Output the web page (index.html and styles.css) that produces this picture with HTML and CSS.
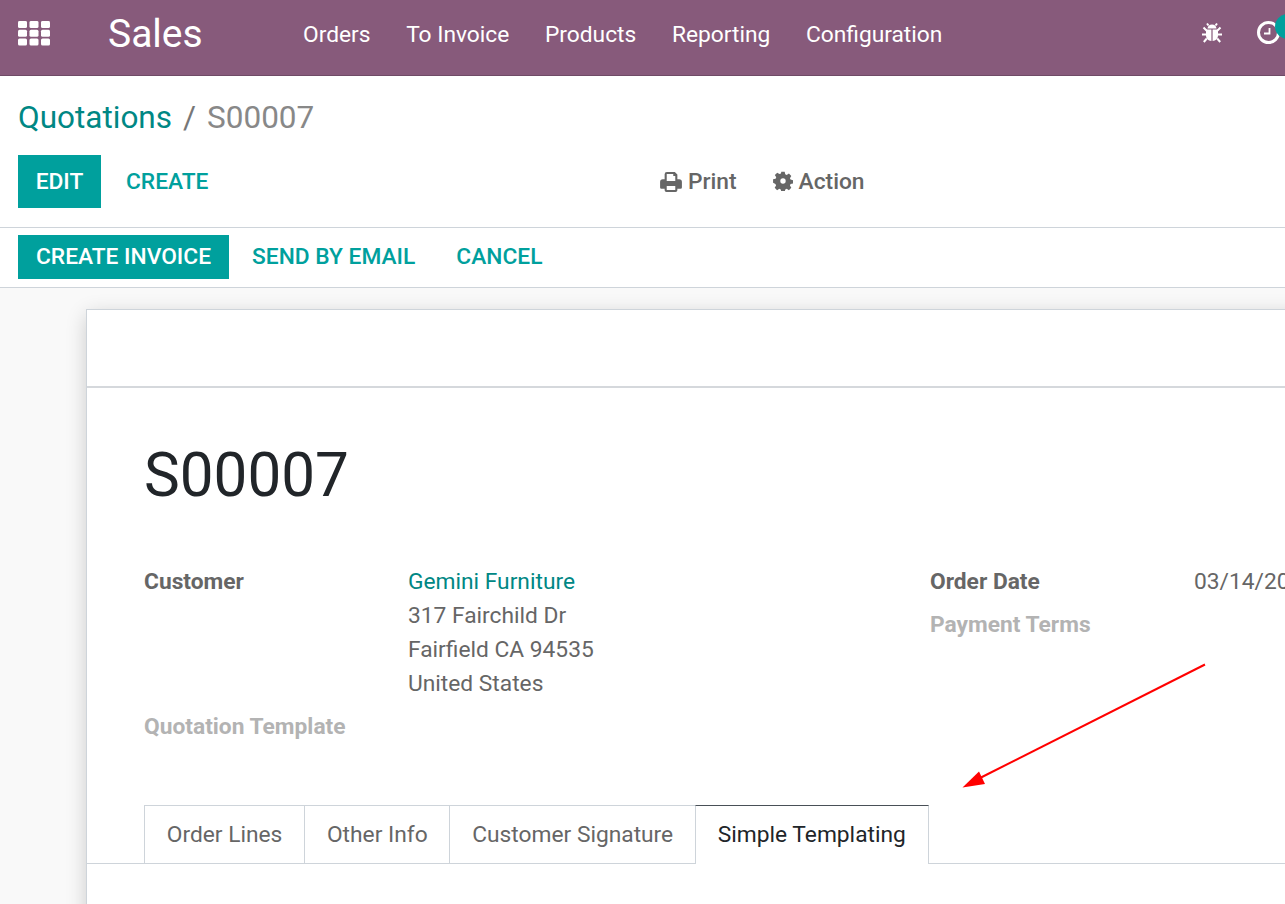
FILE: index.html
```html
<!DOCTYPE html>
<html lang="en">
<head>
<meta charset="utf-8">
<title>Sales</title>
<link rel="stylesheet" href="styles.css">
</head>
<body>
<header class="nav">
  <svg class="apps" viewBox="0 0 32 24.400" width="32" height="24.400" aria-hidden="true">
    <g fill="#fff">
      <rect x="0" y="0" width="9" height="7" rx="1.5"/><rect x="11.500" y="0" width="9" height="7" rx="1.5"/><rect x="23" y="0" width="9" height="7" rx="1.5"/>
      <rect x="0" y="8.700" width="9" height="7" rx="1.5"/><rect x="11.500" y="8.700" width="9" height="7" rx="1.5"/><rect x="23" y="8.700" width="9" height="7" rx="1.5"/>
      <rect x="0" y="17.400" width="9" height="7" rx="1.5"/><rect x="11.500" y="17.400" width="9" height="7" rx="1.5"/><rect x="23" y="17.400" width="9" height="7" rx="1.5"/>
    </g>
  </svg>
  <span class="brand">Sales</span>
  <nav class="menu">
    <span>Orders</span><span>To Invoice</span><span>Products</span><span>Reporting</span><span>Configuration</span>
  </nav>
  <div class="systray">
    <svg class="bug" viewBox="0 0 22 22" width="22" height="22" aria-hidden="true">
      <path d="M6.500 6.500C6.800 3.800 8.600 2.400 11 2.400s4.200 1.400 4.500 4.100z" fill="#fff"/>
      <path d="M5 7.600h5.400v11.400C7.300 18.700 5 16.500 5 13.500zM11.600 7.600H17v5.900c0 3-2.300 5.200-5.400 5.500z" fill="#fff"/>
      <path d="M5.500 8.500 2.500 5.500M16.500 8.500l3-3M5 12.500H1M17 12.500h4M5.800 16.500l-3 3.500M16.200 16.500l3 3.500M7.500 3.500 6 1.500M14.500 3.500 16 1.500" stroke="#fff" stroke-width="2" fill="none"/>
    </svg>
    <span class="clock-wrap">
      <svg class="clock" viewBox="0 0 23 23" width="23" height="23" aria-hidden="true">
        <circle cx="11.500" cy="11.500" r="10" fill="none" stroke="#fff" stroke-width="3"/>
        <path d="M12.500 7v5.500H7" fill="none" stroke="#fff" stroke-width="1.800"/>
      </svg>
      <i class="badge"></i>
    </span>
  </div>
</header>

<section class="control">
  <div class="crumbs"><a class="crumb-link">Quotations</a><span class="crumb-sep">/</span><span class="crumb-cur">S00007</span></div>
  <div class="actions">
    <div class="btns">
      <button class="btn primary edit">EDIT</button>
      <button class="btn link create">CREATE</button>
    </div>
    <div class="side">
      <span class="side-item">
        <svg viewBox="0 0 24 22" width="22" height="20" aria-hidden="true"><path fill="#666" fill-rule="evenodd" d="M5 2.500A2.500 2.500 0 0 1 7.500 0h8.700L19 2.800V8h2a3 3 0 0 1 3 3v6a1.500 1.500 0 0 1-1.500 1.500H19V20a2 2 0 0 1-2 2H7a2 2 0 0 1-2-2v-1.500H1.500A1.500 1.500 0 0 1 0 17v-6a3 3 0 0 1 3-3h2zM7.300 2.200V10h9.400V4.500h-2.200V2.200zM7.300 15.500v4.300h9.400v-4.300z"/></svg>
        Print
      </span>
      <span class="side-item">
        <svg class="gear" viewBox="-1 -1 26 26" width="20" height="20" aria-hidden="true"><path fill="#666" fill-rule="evenodd" d="M9.800 0h4.400l.7 3.300 1.900.8 2.900-1.800 3.100 3.100-1.800 2.900.8 1.900 3.300.7v4.400l-3.300.7-.8 1.900 1.800 2.900-3.100 3.100-2.900-1.800-1.900.8-.7 3.300H9.800l-.7-3.300-1.900-.8-2.900 1.800-3.100-3.100 1.800-2.900-.8-1.900L-.9 14.200V9.800l3.300-.7.8-1.900-1.800-2.900 3.100-3.100 2.900 1.800 1.900-.8zM12 8.500a3.500 3.500 0 1 0 0 7 3.500 3.500 0 0 0 0-7z"/></svg>
        Action
      </span>
    </div>
  </div>
</section>

<section class="statusbar">
  <button class="btn primary invoice">CREATE INVOICE</button>
  <button class="btn link email">SEND BY EMAIL</button>
  <button class="btn link cancel">CANCEL</button>
</section>

<main class="content">
  <article class="sheet">
    <div class="sheet-head"></div>
    <div class="sheet-body">
      <h1 class="title">S00007</h1>
      <div class="fields">
        <div class="col-left">
          <div class="field">
            <div class="label">Customer</div>
            <div class="value"><a class="link-text">Gemini Furniture</a><br>317 Fairchild Dr<br>Fairfield CA 94535<br>United States</div>
          </div>
          <div class="label muted template">Quotation Template</div>
        </div>
        <div class="col-right">
          <div class="field">
            <div class="label">Order Date</div>
            <div class="value">03/14/2019</div>
          </div>
          <div class="label muted terms">Payment Terms</div>
        </div>
      </div>
      <div class="tabs">
        <span class="tab">Order Lines</span><span class="tab">Other Info</span><span class="tab">Customer Signature</span><span class="tab active">Simple Templating</span>
      </div>
    </div>
  </article>
</main>

<svg class="arrow" viewBox="0 0 1285 904" width="1285" height="904" aria-hidden="true">
  <path d="M1205 664.500 980 778" stroke="#f00" stroke-width="2" fill="none"/>
  <path d="M962.500 787.500 979 771.500 985 784z" fill="#f00"/>
</svg>
</body>
</html>
```

FILE: styles.css
```css
* { box-sizing: border-box; }
html, body { margin: 0; height: 904px; overflow: hidden; }
body { font-family: Roboto, "Liberation Sans", sans-serif; color: #666; background: #fff; position: relative; width: 1285px; }

.nav { height: 76px; background: #875a7b; border-bottom: 1px solid #6f4b66; display: flex; align-items: center; padding: 0 0 6px 18px; color: #fff; position: relative; overflow: hidden; }
.apps { flex: none; margin-top: -2px; }
.brand { font-size: 39px; line-height: 40px; margin: -2px 0 0 58px; width: 195px; flex: none; }
.menu { display: flex; gap: 35.650px; font-size: 22.750px; line-height: 28px; flex: none; }
.systray { position: absolute; left: 1201px; top: 21px; width: 84px; overflow: visible; display: flex; align-items: flex-start; gap: 34px; }
.bug { display: block; margin-top: 1px; flex: none; }
.clock-wrap { position: relative; display: block; flex: none; width: 23px; height: 23px; }
.clock { display: block; }
.badge { position: absolute; display: block; left: 18px; top: -7px; width: 25px; height: 25px; border-radius: 50%; background: #00a09d; }

.control { padding: 0 18px; height: 152px; border-bottom: 1px solid #ced4da; }
.crumbs { display: flex; align-items: baseline; font-size: 31.500px; line-height: 36px; padding-top: 24px; }
.crumb-link { color: #008784; }
.crumb-sep { color: #777; margin: 0 11px; }
.crumb-cur { color: #888; }
.actions { display: flex; margin-top: 19px; height: 53px; align-items: stretch; }
.btns { display: flex; width: 642px; flex: none; }
.side { display: flex; gap: 36px; align-items: center; font-size: 22.750px; font-weight: 500; color: #666; }
.side-item { display: flex; align-items: center; gap: 6px; }
.side-item svg { display: block; }
.side-item .gear { margin-top: -2px; }

.btn { font-family: inherit; font-size: 22.750px; font-weight: 500; border: 0; padding: 0; background: none; line-height: 28px; }
.primary { background: #00a09d; color: #fff; }
.link { color: #00a09d; }
.edit { width: 83px; }
.create { margin-left: 25px; }

.statusbar { display: flex; align-items: stretch; height: 60px; padding: 7px 18px 8px; border-bottom: 1px solid #ced4da; }
.invoice { width: 211px; }
.email { margin-left: 23px; }
.cancel { margin-left: 41px; }

.content { height: 616px; background: #f9f9f9; padding: 21px 0 0 86px; overflow: hidden; }
.sheet { width: 1300px; height: 640px; background: #fff; border: 1px solid #ced4da; border-right: 0; box-shadow: 0 5px 20px -1px rgba(0,0,0,.2); }
.sheet-head { height: 78px; border-bottom: 2px solid #d5d8dc; }
.sheet-body { padding-top: 50px; }
.title { margin: 0 0 0 57px; font-size: 60.200px; line-height: 76px; font-weight: 400; color: #212529; }
.fields { display: flex; margin: 51px 0 0 57px; height: 237px; font-size: 22.750px; line-height: 34px; }
.col-left { width: 786px; flex: none; }
.col-right { flex: 1; }
.field { display: flex; }
.label { font-weight: 700; color: #666; }
.col-left .label { width: 264px; }
.col-right .label { width: 264px; }
.muted { color: #b3b3b3; white-space: nowrap; }
.template { margin-top: 9px; }
.terms { margin-top: 9px; }
.link-text { color: #008784; }
.tabs { display: flex; margin-top: 3px; padding-left: 57px; height: 59px; border-bottom: 1px solid #ced4da; font-size: 22.750px; }
.tab { display: flex; align-items: center; height: 59px; padding: 0 21.800px 2px; border: 1px solid #ced4da; border-right: 0; border-bottom: 0; color: #666; }
.tab.active { color: #212529; background: #fff; border-top-color: #495057; border-left-color: #ced4da; border-right: 1px solid #ced4da; height: 59px; }

.arrow { position: absolute; left: 0; top: 0; pointer-events: none; }
```
